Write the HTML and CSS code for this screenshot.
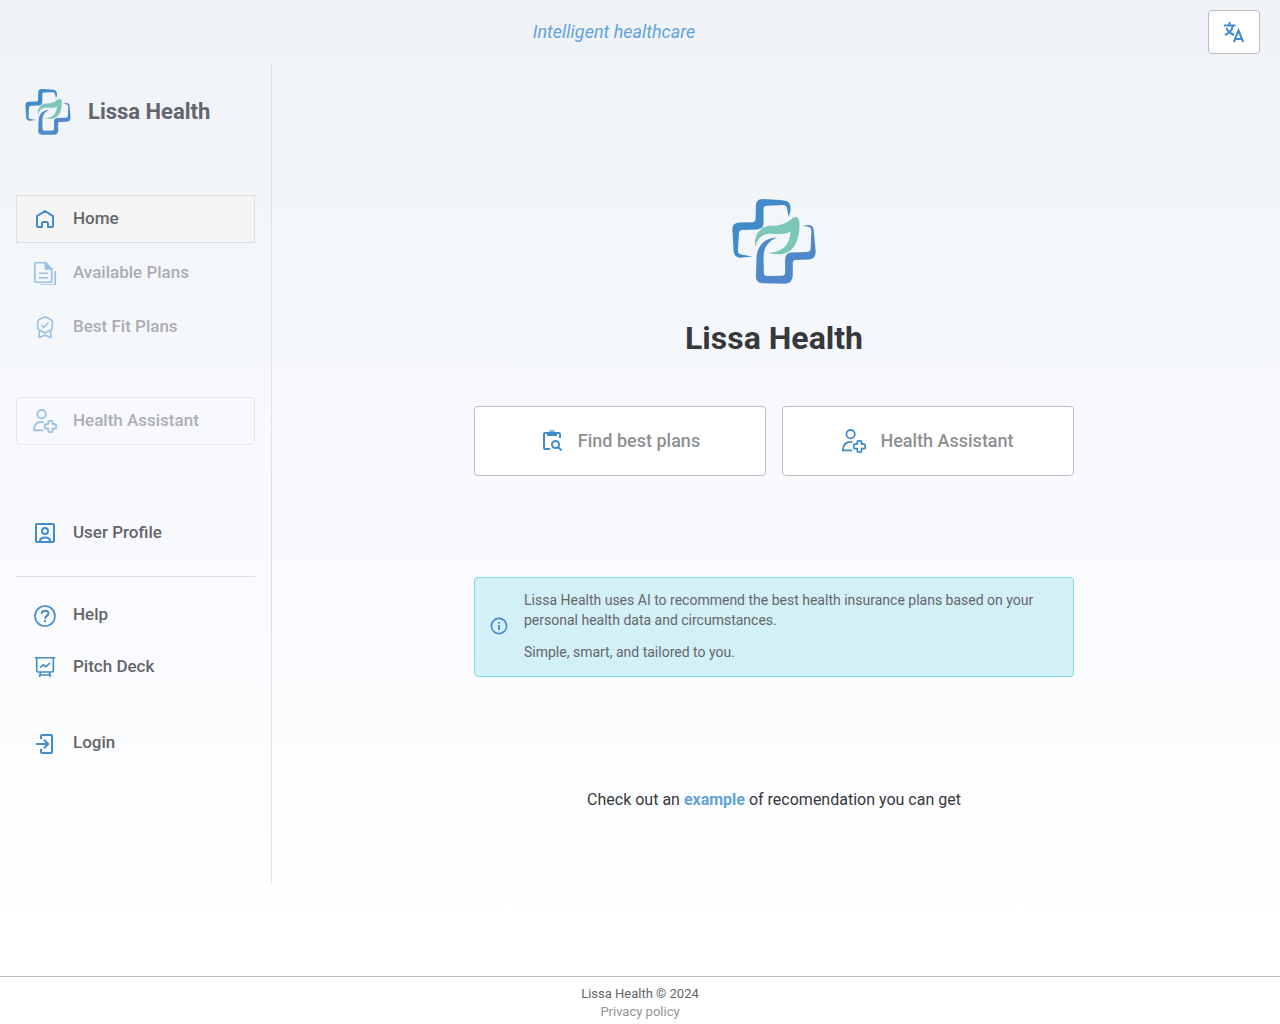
FILE: index.html
```html
<!DOCTYPE html>
<html lang="en">
<head>
<meta charset="utf-8">
<meta name="viewport" content="width=device-width, initial-scale=1">
<title>Lissa Health</title>
<link rel="stylesheet" href="styles.css">
</head>
<body>
<svg class="sprite" aria-hidden="true">
  <symbol id="logo" viewBox="36 26 253 256">
    <path fill="#428bca" d="M207 81L212 62Q215 38 200 32L182 29L127 26Q109 28 108 44L107 88Q106 95 99 96L55 97Q38 99 37 116L41 184Q43 201 60 203L98 199L64 193Q53 192 54 180L57 128Q58 119 68 119L112 118Q130 116 131 100L131 54Q131 46 141 46L188 44Q201 44 202 55Z"/>
    <path fill="#5089c9" d="M247 107L265 104Q281 104 282 119L288 185Q288 207 268 208L226 210Q218 211 219 219L219 258Q217 280 197 281L128 280Q109 278 108 261L110 200C113 164 136 143 171 142C145 154 131 170 131 204L132 249Q132 258 142 258L187 257Q196 256 196 248L196 207Q197 188 215 187L262 186Q272 185 273 175L275 122Q274 110 262 109Z"/>
    <path fill="#7cc7b8" d="M106 172C101 131 122 108 153 106C183 109 204 96 219 83Q237 74 239 96C241 158 218 207 145 189C189 186 210 165 212 125C191 136 171 129 149 131C121 133 111 151 106 172Z"/>
  </symbol>
  <symbol id="assistant" viewBox="0 0 24 24">
    <g fill="none" stroke="currentColor" stroke-width="1.8">
      <circle cx="8.600" cy="5.200" r="4.200"/>
      <path d="M10.400 12.900H9C4 12.900 1 16 .9 21.300H10.200"/>
      <path stroke-linejoin="round" d="M16.300 11.900h2.200q1 0 1 1v2.200h2.600q1 0 1 1v2.600q0 1-1 1h-2.600v2.400q0 1-1 1h-2.200q-1 0-1-1v-2.400h-2.500q-1 0-1-1v-2.600q0-1 1-1h2.500v-2.200q0-1 1-1z"/>
    </g>
  </symbol>
</svg>

<header class="topbar">
  <p class="tagline">Intelligent healthcare</p>
  <button class="language" type="button" aria-label="Change language">
    <svg class="icon" viewBox="0 0 24 24" fill="none" stroke="currentColor" stroke-width="2"><path d="M7.500 2v3.500M2 5.500h11.500M4.300 8c1.500 3 4 5.500 7.700 7M10.800 6C9.800 10.500 7 13.500 2.800 15M11.800 22l4.700-11.500L21.200 22M13.300 19h6.600"/></svg>
  </button>
</header>

<div class="layout">
  <aside class="sidebar">
    <a class="brand" href="#"><svg class="brand-logo"><use href="#logo"/></svg><span>Lissa Health</span></a>
    <nav aria-label="Main">
      <div class="group">
        <a class="item active" href="#">
          <svg class="icon" viewBox="0 0 24 24" fill="none" stroke="currentColor" stroke-width="2" stroke-linejoin="round"><path d="M4 9.200L12 4l8 5.200V19a1 1 0 0 1-1 1h-4v-3.500a1.500 1.500 0 0 0-1.500-1.500h-3A1.500 1.500 0 0 0 9 16.500V20H5a1 1 0 0 1-1-1z"/></svg>
          <span>Home</span></a>
        <a class="item disabled" href="#">
          <svg class="icon" viewBox="0 0 24 24" fill="none" stroke="currentColor" stroke-width="1.600"><path d="M2.800 1.800H12.500l6.200 6.200V20.200a1 1 0 0 1-1 1H2.800a1 1 0 0 1-1-1V2.800a1 1 0 0 1 1-1z"/><path fill="currentColor" d="M12.500 1.800V8h6.200z"/><path d="M6 12.300h9M6 16.700h9M22.200 10V23a1 1 0 0 1-1 1H7.500"/></svg>
          <span>Available Plans</span></a>
        <a class="item disabled" href="#">
          <svg class="icon" viewBox="0 0 24 24" fill="none" stroke="currentColor" stroke-width="1.600" stroke-linejoin="round"><path d="M12 1.800l5.800 2.700q1.500.7 1.500 2.300v6q0 1.300-1.200 2L12 18l-6.100-3.200q-1.200-.7-1.200-2v-6q0-1.600 1.500-2.300z"/><path d="M8.300 10l2.500 2.300L15.500 7.500M6.500 15.500L6 22.500l6-2.300 6 2.300-.5-7"/></svg>
          <span>Best Fit Plans</span></a>
      </div>
      <div class="group assistant-group">
        <a class="item outlined disabled" href="#"><svg class="icon"><use href="#assistant"/></svg><span>Health Assistant</span></a>
      </div>
      <div class="group profile-group">
        <a class="item" href="#">
          <svg class="icon" viewBox="0 0 24 24" fill="none" stroke="currentColor" stroke-width="2"><rect x="3" y="3" width="18" height="18" rx="1"/><circle cx="12" cy="10" r="3"/><path d="M7 21v-1c0-2 2-3.500 5-3.500s5 1.500 5 3.500v1"/></svg>
          <span>User Profile</span></a>
      </div>
      <div class="group support-group">
        <a class="item" href="#">
          <svg class="icon" viewBox="0 0 24 24" fill="none" stroke="currentColor" stroke-width="1.600"><circle cx="12" cy="13" r="10"/><path stroke-width="2" d="M8.800 10.700c0-4 6.700-4 6.700-.2 0 2.500-3.400 2.300-3.400 4.900v.4M12 17.200v2"/></svg>
          <span>Help</span></a>
        <a class="item" href="#">
          <svg class="icon" viewBox="0 0 24 24" fill="none" stroke="currentColor" stroke-width="1.600"><path d="M1.700 2.800h20.600M3.700 2.800V15.500a1.500 1.500 0 0 0 1.500 1.500h13.600a1.500 1.500 0 0 0 1.500-1.500V2.800M7 12.700l3.300-3 2.500 2L17 8M7.700 17l-1.200 5M16.300 17l1.200 5M7 20h10"/></svg>
          <span>Pitch Deck</span></a>
      </div>
      <div class="group login-group">
        <a class="item" href="#">
          <svg class="icon" viewBox="0 0 24 24" fill="none" stroke="currentColor" stroke-width="2"><path d="M8 8V5a1 1 0 0 1 1-1h9a1 1 0 0 1 1 1v16a1 1 0 0 1-1 1H9a1 1 0 0 1-1-1v-3M3 13h12M11 8.800L15.200 13 11 17.200"/></svg>
          <span>Login</span></a>
      </div>
    </nav>
  </aside>

  <main class="content">
    <svg class="hero-logo" role="img" aria-label="Lissa Health logo"><use href="#logo"/></svg>
    <h1>Lissa Health</h1>
    <div class="actions">
      <button type="button">
        <svg class="icon" viewBox="0 0 24 24"><g fill="none" stroke="currentColor" stroke-width="2"><path d="M10 20H5a1 1 0 0 1-1-1V5a1 1 0 0 1 1-1h14a1 1 0 0 1 1 1v4"/><circle cx="15.500" cy="15.500" r="3.500"/><path d="M18 18l3.500 3.500"/></g><path fill="currentColor" fill-rule="evenodd" d="M7 3h2.200a3 3 0 0 1 5.600 0H17v4H7zm5-1a1 1 0 1 0 0 2 1 1 0 0 0 0-2z"/></svg>
        <span>Find best plans</span></button>
      <button type="button"><svg class="icon"><use href="#assistant"/></svg><span>Health Assistant</span></button>
    </div>
    <section class="notice">
      <svg class="notice-icon" viewBox="0 0 20 20" fill="none" stroke="currentColor"><circle cx="10" cy="10" r="7.600" stroke-width="1.600"/><path stroke-width="1.800" d="M10 9v5M10 6v1.800"/></svg>
      <div>
        <p>Lissa Health uses AI to recommend the best health insurance plans based on your personal health data and circumstances.</p>
        <p>Simple, smart, and tailored to you.</p>
      </div>
    </section>
    <p class="sample">Check out an <a href="#">example</a> of recomendation you can get</p>
  </main>
</div>

<footer class="footer">
  <span>Lissa Health © 2024</span>
  <a href="#">Privacy policy</a>
</footer>
</body>
</html>
```
FILE: styles.css
```css
* { box-sizing: border-box; }
body {
  margin: 0;
  min-height: 100vh;
  display: flex;
  flex-direction: column;
  font-family: Roboto, "Liberation Sans", sans-serif;
  color: #37383c;
  background: linear-gradient(#eff3f8 0%, #f2f6f9 18%, #f6f8fc 38%, #fbfcfe 70%, #ffffff 90%);
}
p, h1 { margin: 0; }
a { color: inherit; text-decoration: none; }
button { font: inherit; cursor: pointer; }
.sprite { position: absolute; width: 0; height: 0; }
.icon { width: 24px; height: 24px; flex: none; color: #428bca; }

.topbar {
  display: flex;
  align-items: center;
  height: 64px;
  padding: 0 20px;
}
.tagline {
  flex: 1;
  padding-bottom: 2px;
  text-align: center;
  font-size: 18px;
  font-style: italic;
  color: #62a2da;
}
.language {
  display: flex;
  align-items: center;
  justify-content: center;
  width: 52px;
  height: 44px;
  padding: 0;
  background: #fff;
  border: 1px solid #bdbdc1;
  border-radius: 4px;
}

.layout { display: flex; flex: 1; align-items: flex-start; }
.sidebar {
  width: 272px;
  flex: none;
  padding: 24px 16px 116px;
  border-right: 1px solid #dfe1e5;
}
.brand {
  display: flex;
  align-items: center;
  gap: 17px;
  height: 48px;
  padding-left: 9px;
  margin-bottom: 59px;
  font-size: 22px;
  font-weight: 700;
  color: #64656a;
}
.brand-logo { width: 46px; height: 46px; }
.brand span, .item span, .actions span { padding-bottom: 2px; }
.group { display: flex; flex-direction: column; gap: 6px; }
.item {
  display: flex;
  align-items: center;
  gap: 16px;
  height: 48px;
  padding: 0 16px;
  border: 1px solid transparent;
  font-size: 17px;
  line-height: 24px;
  font-weight: 500;
  color: #64656a;
}
.active { background: #f5f5f5; border-color: #dfdfe0; }
.outlined { border-color: #d5d6d9; border-radius: 4px; }
.disabled { opacity: .5; }
.assistant-group { margin-top: 46px; }
.profile-group {
  padding: 64px 0 19px;
  border-bottom: 1px solid #dfe1e5;
}
.support-group { gap: 4px; padding-top: 14px; }
.login-group { margin-top: 28px; }

.content {
  flex: 1;
  display: flex;
  flex-direction: column;
  align-items: center;
  padding: 135px 4px 64px 0;
}
.hero-logo { width: 84px; height: 85px; }
h1 { margin-top: 34px; font-size: 32px; line-height: 40px; font-weight: 700; }
.actions {
  display: grid;
  grid-template-columns: 1fr 1fr;
  gap: 16px;
  width: 100%;
  max-width: 600px;
  margin-top: 48px;
}
.actions button {
  display: flex;
  align-items: center;
  justify-content: center;
  gap: 14px;
  height: 70px;
  background: #fff;
  border: 1px solid #bdbdc1;
  border-radius: 4px;
  font-size: 18px;
  font-weight: 500;
  color: #8f9094;
}
.notice {
  display: flex;
  align-items: center;
  gap: 15px;
  width: 100%;
  max-width: 600px;
  margin-top: 101px;
  padding: 12px 14px 14px;
  background: #d3f0f6;
  border: 1px solid #7fdde3;
  border-radius: 4px;
  font-size: 14px;
  line-height: 20px;
  color: #64656a;
}
.notice p + p { margin-top: 12px; }
.notice-icon { width: 20px; height: 20px; flex: none; color: #428bca; }
.sample { margin-top: 111px; font-size: 16px; line-height: 24px; }
.sample a { font-weight: 700; color: #62a2da; }

.footer {
  display: flex;
  flex-direction: column;
  align-items: center;
  height: 48px;
  padding-top: 8px;
  background: #fff;
  border-top: 1px solid #bdbdc1;
  font-size: 13px;
  line-height: 18px;
  color: #64656a;
}
.footer a { color: #939498; }
```
